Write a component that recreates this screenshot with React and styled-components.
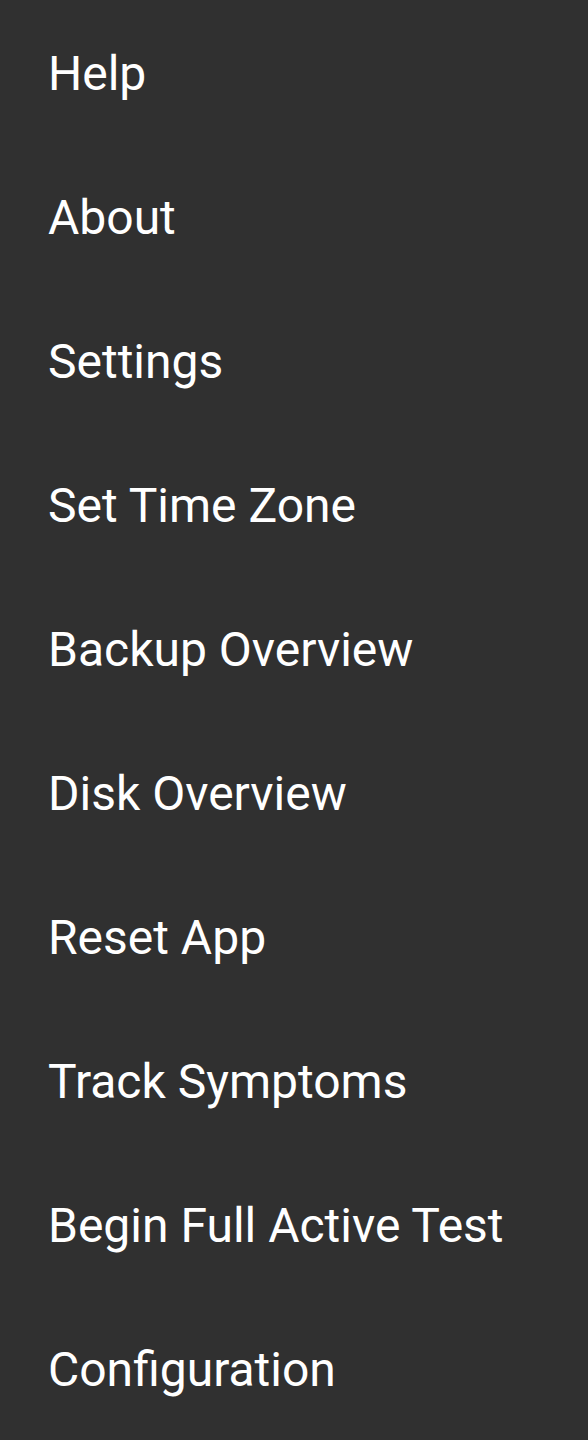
import React from "react";
import styled, { createGlobalStyle } from "styled-components";

const Global = createGlobalStyle`
  html, body { margin: 0; padding: 0; background: #303030; }
`;

const Menu = styled.ul`
  list-style: none;
  margin: 0;
  padding: 0;
  width: 588px;
  background: #303030;
`;

const Item = styled.li`
  height: 144px;
  display: flex;
  align-items: center;
  padding: 2px 0 0 48px;
  font-family: Roboto, "Noto Sans", sans-serif;
  font-size: 48px;
  color: #ffffff;
  box-sizing: border-box;
`;

const items = [
  "Help",
  "About",
  "Settings",
  "Set Time Zone",
  "Backup Overview",
  "Disk Overview",
  "Reset App",
  "Track Symptoms",
  "Begin Full Active Test",
  "Configuration",
];

export default function App() {
  return (
    <>
      <Global />
      <Menu>
        {items.map((t) => (
          <Item key={t}>{t}</Item>
        ))}
      </Menu>
    </>
  );
}
